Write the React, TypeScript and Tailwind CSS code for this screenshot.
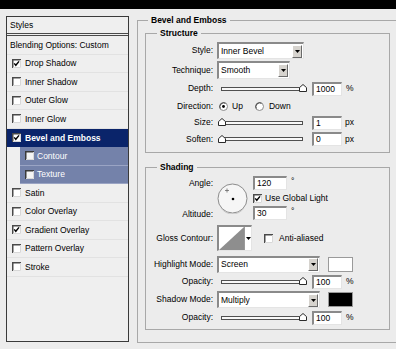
import React from 'react';

// Classic Windows-style small controls
const CheckBox = ({ checked = false, light = false }: { checked?: boolean; light?: boolean }) => (
  <svg width="9" height="9" viewBox="0 0 9 9" className="shrink-0">
    <rect x="0" y="0" width="9" height="9" fill={light ? '#f4f4f4' : '#ffffff'} />
    <path d="M0.75 9V0.75H9" fill="none" stroke={light ? '#3a3a3a' : '#4a4a4a'} strokeWidth="1.5" />
    <path d="M8.5 1V8.5H1" fill="none" stroke="#d8d8d8" strokeWidth="1" />
    {checked && <path d="M2.2 4.4L3.8 6.3L7 2.4" fill="none" stroke="#000" strokeWidth="1.4" />}
  </svg>
);

const Radio = ({ on = false }: { on?: boolean }) => (
  <svg width="9" height="9" viewBox="0 0 9 9" className="shrink-0">
    <circle cx="4.5" cy="4.5" r="4" fill="#fff" stroke="#8a8a8a" strokeWidth="1" />
    <path d="M1.2 6.5A4 4 0 0 1 6.5 1.2" fill="none" stroke="#404040" strokeWidth="1" />
    {on && <circle cx="4.5" cy="4.5" r="1.4" fill="#000" />}
  </svg>
);

const Slider = ({ at }: { at: 'left' | 'right' }) => (
  <div className="relative w-[82px] h-[9px] flex items-center ml-[8px]">
    <div className="w-full h-[4px] border border-[#505050] bg-[#f8f8f8]" />
    <svg
      width="8"
      height="8"
      viewBox="0 0 8 8"
      className={`absolute top-[0px] ${at === 'left' ? 'left-[-3px]' : 'right-[-4px]'}`}
    >
      <path d="M0.5 7.5V3.6L4 0.5L7.5 3.6V7.5Z" fill="#fff" stroke="#2a2a2a" strokeWidth="1" />
    </svg>
  </div>
);

const Field = ({ value, w = 'w-[30px]', ml = 'ml-[9px]' }: { value: string; w?: string; ml?: string }) => (
  <div
    className={`${w} ${ml} h-[14px] bg-white border-t-2 border-l-2 border-t-[#8a8a8a] border-l-[#8a8a8a] border-r border-b border-r-[#e4e4e4] border-b-[#e4e4e4] flex items-center pl-[2px]`}
  >
    {value}
  </div>
);

const Select = ({ value, w, h = 'h-[17px]' }: { value: string; w: string; h?: string }) => (
  <div
    className={`${w} ${h} ml-[4px] bg-white border-t-2 border-l-2 border-t-[#8a8a8a] border-l-[#8a8a8a] border-r border-b border-r-[#e4e4e4] border-b-[#e4e4e4] flex items-center`}
  >
    <span className="flex-1 pl-[2px]">{value}</span>
    <div className="w-[10px] h-[13px] mr-[1px] bg-[#d6d3ce] border-t border-l border-t-white border-l-white border-r border-b border-r-[#6a6a6a] border-b-[#6a6a6a] flex items-center justify-center">
      <svg width="5" height="3" viewBox="0 0 5 3">
        <path d="M0 0H5L2.5 3Z" fill="#000" />
      </svg>
    </div>
  </div>
);

const Label = ({ children }: { children: React.ReactNode }) => (
  <span className="w-[67px] shrink-0 text-right">{children}</span>
);

const Legend = ({ children, left }: { children: React.ReactNode; left: string }) => (
  <span className={`absolute top-[-5px] ${left} px-[3px] bg-[#ececec] font-bold leading-[9px]`}>{children}</span>
);

const StyleRow = ({ label, checked = false }: { label: string; checked?: boolean }) => (
  <div className="h-[18.5px] shrink-0 border-b border-[#e2e2e2] flex items-center pl-[5px] gap-[4px]">
    <CheckBox checked={checked} />
    <span>{label}</span>
  </div>
);

const SubRow = ({ label }: { label: string }) => (
  <div className="h-[18.5px] shrink-0 ml-[13px] bg-[#7482aa] border-b border-[#9aa4c4] flex items-center pl-[5px] gap-[3px] text-white">
    <CheckBox light />
    <span>{label}</span>
  </div>
);

export default function App() {
  return (
    <div className="w-[396px] h-[349px] overflow-hidden bg-[#ececec] text-black text-[8.5px] leading-none font-['Liberation_Sans',Arial,sans-serif] flex flex-col">
      <div className="h-[9px] bg-black shrink-0" />

      <div className="flex items-start pl-[6px] gap-[8px]">
        {/* Styles list */}
        <div className="w-[123px] h-[326px] mt-[7px] shrink-0 border border-[#3a3a3a] bg-[#efefef] flex flex-col">
          <div className="h-[19px] shrink-0 border-b-[3px] border-double border-[#4a4a4a] flex items-center pl-[3px]">
            Styles
          </div>
          <div className="h-[18.5px] shrink-0 border-b border-[#e2e2e2] flex items-center pl-[3px]">
            Blending Options: Custom
          </div>
          <StyleRow label="Drop Shadow" checked />
          <StyleRow label="Inner Shadow" />
          <StyleRow label="Outer Glow" />
          <StyleRow label="Inner Glow" />
          <div className="h-[18.5px] shrink-0 bg-[#0a246a] flex items-center pl-[5px] gap-[4px] text-white font-bold">
            <CheckBox checked />
            <span>Bevel and Emboss</span>
          </div>
          <SubRow label="Contour" />
          <SubRow label="Texture" />
          <StyleRow label="Satin" />
          <StyleRow label="Color Overlay" />
          <StyleRow label="Gradient Overlay" checked />
          <StyleRow label="Pattern Overlay" />
          <StyleRow label="Stroke" />
        </div>

        {/* Bevel and Emboss group */}
        <div className="relative w-[270px] h-[323px] mt-[11px] shrink-0 border-l border-t border-b border-[#a8a8a8] pt-[12px] pl-[7px]">
          <Legend left="left-[10px]">Bevel and Emboss</Legend>

          {/* Structure */}
          <div className="relative w-[245px] h-[120px] border border-[#a8a8a8] pt-[7px] flex flex-col">
            <Legend left="left-[11px]">Structure</Legend>
            <div className="h-[19px] flex items-center">
              <Label>Style:</Label>
              <Select value="Inner Bevel" w="w-[87px]" />
            </div>
            <div className="h-[20px] flex items-center">
              <Label>Technique:</Label>
              <Select value="Smooth" w="w-[73px]" h="h-[18px]" />
            </div>
            <div className="h-[17px] flex items-center">
              <Label>Depth:</Label>
              <Slider at="right" />
              <Field value="1000" />
              <span className="ml-[4px]">%</span>
            </div>
            <div className="h-[18px] flex items-center">
              <Label>Direction:</Label>
              <span className="ml-[6px] flex items-center">
                <Radio on />
              </span>
              <span className="ml-[4px]">Up</span>
              <span className="ml-[12px] flex items-center">
                <Radio />
              </span>
              <span className="ml-[5px]">Down</span>
            </div>
            <div className="h-[15px] flex items-center">
              <Label>Size:</Label>
              <Slider at="left" />
              <Field value="1" />
              <span className="ml-[3px]">px</span>
            </div>
            <div className="h-[18px] flex items-center">
              <Label>Soften:</Label>
              <Slider at="left" />
              <Field value="0" />
              <span className="ml-[3px]">px</span>
            </div>
          </div>

          {/* Shading */}
          <div className="relative w-[245px] h-[163px] mt-[14px] border border-[#a8a8a8] pt-[8px] flex flex-col">
            <Legend left="left-[11px]">Shading</Legend>

            <div className="h-[45px] flex">
              <div className="w-[67px] shrink-0 flex flex-col justify-between text-right">
                <span className="h-[14px] flex items-center justify-end">Angle:</span>
                <span className="h-[14px] flex items-center justify-end">Altitude:</span>
              </div>
              <svg width="31" height="31" viewBox="0 0 31 31" className="ml-[4px] mt-[7px] shrink-0">
                <circle cx="15.5" cy="15.5" r="14.5" fill="#f6f6f6" stroke="#8c8c8c" strokeWidth="1" />
                <path d="M4 25A14 14 0 0 0 27 25" fill="none" stroke="#c8c8c8" strokeWidth="1" />
                <path d="M8 7.5H12M10 5.5V9.5" stroke="#6a6a6a" strokeWidth="0.8" />
                <circle cx="16" cy="16" r="1.3" fill="#000" />
              </svg>
              <div className="ml-[5px] flex flex-col">
                <div className="flex">
                  <Field value="120" w="w-[34px]" ml="ml-0" />
                  <span className="ml-[4px] mt-[1px]">°</span>
                </div>
                <div className="h-[10px] mt-[3px] flex items-center gap-[3px]">
                  <CheckBox checked />
                  <span>Use Global Light</span>
                </div>
                <div className="flex mt-[3px]">
                  <Field value="30" w="w-[34px]" ml="ml-0" />
                  <span className="ml-[4px] mt-[1px]">°</span>
                </div>
              </div>
            </div>

            <div className="h-[26px] mt-[4px] flex items-center">
              <Label>Gloss Contour:</Label>
              <div className="ml-[4px] w-[35px] h-[26px] bg-white border-t-2 border-l-2 border-t-[#8a8a8a] border-l-[#8a8a8a] border-r border-b border-r-[#e4e4e4] border-b-[#e4e4e4] flex">
                <svg width="25" height="23" viewBox="0 0 25 23" className="shrink-0">
                  <rect width="25" height="23" fill="#fff" />
                  <path d="M0 23L25 0V23Z" fill="#8e8e8e" />
                </svg>
                <div className="flex-1 border-l border-[#9a9a9a] flex items-center justify-center">
                  <svg width="5" height="3" viewBox="0 0 5 3">
                    <path d="M0 0H5L2.5 3Z" fill="#000" />
                  </svg>
                </div>
              </div>
              <span className="ml-[12px] flex items-center">
                <CheckBox />
              </span>
              <span className="ml-[6px]">Anti-aliased</span>
            </div>

            <div className="h-[18px] mt-[4px] flex items-center">
              <Label>Highlight Mode:</Label>
              <Select value="Screen" w="w-[103px]" />
              <div className="ml-[8px] w-[25px] h-[15px] bg-white border border-[#9a9a9a]" />
            </div>
            <div className="h-[17px] flex items-center">
              <Label>Opacity:</Label>
              <Slider at="right" />
              <Field value="100" />
              <span className="ml-[4px]">%</span>
            </div>
            <div className="h-[19px] flex items-center">
              <Label>Shadow Mode:</Label>
              <Select value="Multiply" w="w-[103px]" />
              <div className="ml-[8px] w-[25px] h-[15px] bg-black border border-[#9a9a9a]" />
            </div>
            <div className="h-[17px] flex items-center">
              <Label>Opacity:</Label>
              <Slider at="right" />
              <Field value="100" />
              <span className="ml-[4px]">%</span>
            </div>
          </div>
        </div>
      </div>
    </div>
  );
}
